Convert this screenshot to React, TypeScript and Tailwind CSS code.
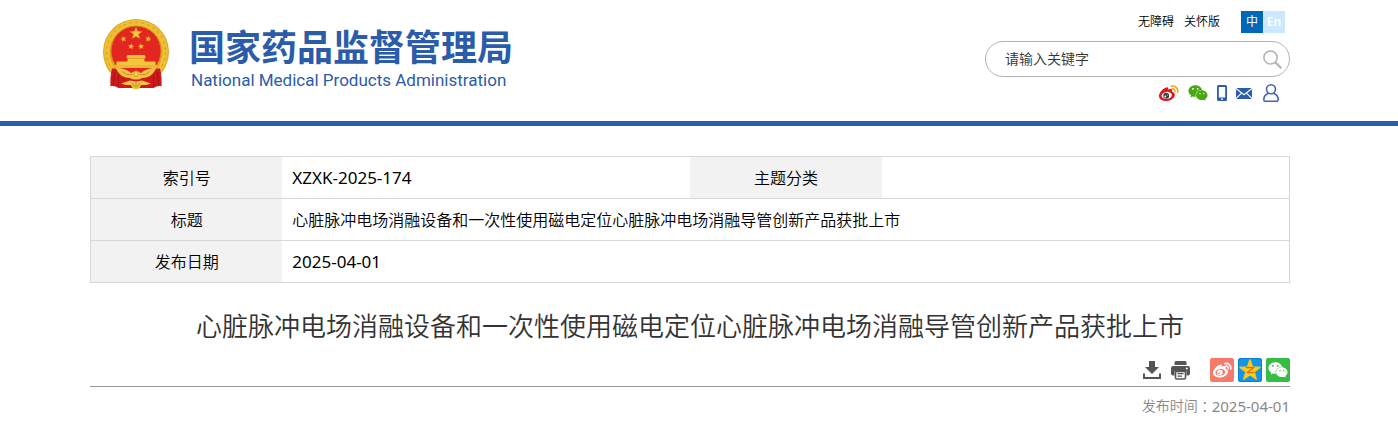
import { useState } from 'react';
import type { ReactNode } from 'react';
import { FaWeixin } from 'react-icons/fa6';

const TITLE = '心脏脉冲电场消融设备和一次性使用磁电定位心脏脉冲电场消融导管创新产品获批上市';
const STAR = 'M0 -10 L2.35 -3.24 L9.51 -3.09 L3.8 1.24 L5.88 8.09 L0 4 L-5.88 8.09 L-3.8 1.24 L-9.51 -3.09 L-2.35 -3.24 Z';

function Emblem() {
  return (
    <svg viewBox="0 0 66 72" className="h-[72px] w-[66px]" role="img" aria-label="国徽">
      <circle cx="33" cy="34" r="33" fill="#dfa51c" />
      <circle cx="33" cy="34" r="29.200" fill="none" stroke="#eec037" strokeWidth="5.500" />
      <circle cx="33" cy="34" r="29.500" fill="none" stroke="#e0a822" strokeWidth="1.500" strokeDasharray="3 3" />
      <circle cx="33" cy="33" r="25" fill="#e32620" stroke="#cf8f1a" strokeWidth="0.8" />
      <path d={STAR} transform="translate(33 15.500) scale(0.66)" fill="#f3c53a" />
      <path d={STAR} transform="translate(20.500 21) rotate(-15) scale(0.33)" fill="#f3c53a" />
      <path d={STAR} transform="translate(45.200 21) rotate(15) scale(0.33)" fill="#f3c53a" />
      <path d={STAR} transform="translate(28 28.500) rotate(10) scale(0.33)" fill="#f3c53a" />
      <path d={STAR} transform="translate(38 28.500) rotate(-10) scale(0.33)" fill="#f3c53a" />
      <path d="M24.500 37h17l1.500 3h-1.500v3.500h11V47h-39v-3.500h11V40H23z" fill="#f3c53a" />
      <path d="M24 40.300h18" stroke="#d9861f" strokeWidth="0.7" />
      <path d="M11 47h44l-2 3H13z" fill="#edb833" />
      <path d="M9 50.500c6 0 10 2 13 5h22c3-3 7-5 13-5 1.500 6 1.900 12 1.500 18-3-1-5 0-8 1.500H15.500c-3-1.500-5-2.500-8-1.500-.4-6 0-12 1.500-18z" fill="#cf1a1c" />
      <path d="M11.500 54l-1 13M15.500 57l-.5 12M54.500 54l1 13M50.500 57l.5 12" stroke="#9f1215" strokeWidth="1" />
      <path d="M13 50c7 0 11 1.500 15 5l5-2.500 5 2.500c4-3.500 8-5 15-5-2 6-7 10-14 10-3 2-9 2-12 0-7 0-12-4-14-10z" fill="#f1c441" />
      <path d="M19 53.500c4 3 6 3.500 10 3M47 53.500c-4 3-6 3.500-10 3" fill="none" stroke="#cf8b1c" strokeWidth="1" />
      <circle cx="33" cy="56" r="2.500" fill="#f7d65a" stroke="#c9851c" strokeWidth="0.7" />
      <path d="M18 65.500l9-3 6 1 6-1 9 3-5 1.500-5 0-2 4h-6l-2-4h-5z" fill="#f1c441" />
      <path d="M33 64v6M29.500 65l2 4M36.500 65l-2 4" stroke="#bd7517" strokeWidth="0.7" />
    </svg>
  );
}

function WeiboIcon({ mono = false, className }: { mono?: boolean; className: string }) {
  const body = mono ? '#fff' : '#e0141b';
  const wave = mono ? '#fff' : '#f3a712';
  const eye = mono ? '#f57a6c' : '#fff';
  const pupil = mono ? '#fff' : '#3d3d3d';
  return (
    <svg viewBox="0 0 20 16" className={className} aria-hidden="true">
      <path d="M7.800 2.200c1.300-.3 1.800.8 1.300 2.300 2-.9 4.300-.9 4.200.8l-.3 1.400c1.700.5 2.800 1.400 2.800 3 0 3.200-3.800 6.200-8.300 6.200C3.300 15.900 0 14 0 10.900 0 7.500 4.700 2.800 7.800 2.200z" fill={body} />
      <ellipse cx="7.700" cy="10.400" rx="5.200" ry="3.500" fill={eye} transform="rotate(-7 7.700 10.400)" />
      <circle cx="7.200" cy="10.700" r="2.900" fill={pupil} />
      <circle cx="6.300" cy="11.500" r="0.900" fill={eye} />
      <circle cx="8.200" cy="10.100" r="0.500" fill={eye} />
      <path d="M12.500 1.200c3.600-.9 6.900 1.800 6.100 5.900" fill="none" stroke={wave} strokeWidth="1.700" strokeLinecap="round" />
      <path d="M13 3.900c2-.3 3.300.9 2.900 2.700" fill="none" stroke={wave} strokeWidth="1.500" strokeLinecap="round" />
    </svg>
  );
}

function PhoneIcon() {
  return (
    <svg viewBox="0 0 10 16" className="h-4 w-[10px]" fill="#2b5cad" aria-hidden="true">
      <path fillRule="evenodd" d="M1.500 0h7A1.500 1.500 0 0 1 10 1.500v13A1.500 1.500 0 0 1 8.500 16h-7A1.500 1.500 0 0 1 0 14.500v-13A1.500 1.500 0 0 1 1.500 0zM1.800 2v10.500h6.400V2zM4 13.500v1.300h2v-1.300z" />
    </svg>
  );
}

function MailIcon() {
  return (
    <svg viewBox="0 0 16 11" className="h-[11px] w-4" aria-hidden="true">
      <path d="M0 0h16v11H0z" fill="#2b5cad" />
      <path d="M0 .5l8 6.200L16 .5M0 10.500l5.500-5.400M16 10.500l-5.500-5.400" fill="none" stroke="#fff" strokeWidth="1.100" />
    </svg>
  );
}

function UserIcon() {
  return (
    <svg viewBox="0 0 16 18" className="h-[18px] w-4" fill="none" stroke="#4560b0" strokeWidth="1.600" aria-hidden="true">
      <circle cx="8" cy="5.300" r="4.500" />
      <path d="M5.300 9.400C2.300 10.400.8 12.600.8 15.500c0 1.100.6 1.700 1.600 1.700h11.200c1 0 1.600-.6 1.600-1.700 0-2.900-1.500-5.100-4.500-6.100" />
    </svg>
  );
}

function DownloadIcon() {
  return (
    <svg viewBox="0 0 18 18" className="size-[18px]" aria-hidden="true">
      <path d="M6 0h6v6h4L9 13 2 6h4z" fill="#555" />
      <path d="M1 12.500V17h16v-4.500" fill="none" stroke="#555" strokeWidth="2" />
    </svg>
  );
}

function PrinterIcon() {
  return (
    <svg viewBox="0 0 19 19" className="size-[19px]" aria-hidden="true">
      <path d="M5 0h9a1.500 1.500 0 0 1 1.500 1.500V4h-12V1.500A1.500 1.500 0 0 1 5 0z" fill="#555" />
      <path d="M2 5h15a2 2 0 0 1 2 2v5.500a2 2 0 0 1-2 2h-1.500V10h-12v4.500H2a2 2 0 0 1-2-2V7a2 2 0 0 1 2-2z" fill="#555" />
      <circle cx="15.800" cy="7.500" r="1" fill="#fff" />
      <path d="M4.500 10.500h10v6.200c0 .7-.5 1.300-1.300 1.300H5.800c-.8 0-1.300-.6-1.300-1.300z" fill="#fff" stroke="#555" strokeWidth="1.600" />
      <path d="M6.500 12.700h6M6.500 15.200h4.500" stroke="#555" strokeWidth="1.300" />
    </svg>
  );
}

function QzoneIcon() {
  return (
    <svg viewBox="0 0 24 24" className="size-6" aria-hidden="true">
      <rect x="0.500" y="0.500" width="23" height="23" rx="1.500" fill="#1296e8" stroke="#0b7fd0" />
      <path d={STAR} transform="translate(12 12.500) scale(1.040)" fill="#ffd21f" stroke="#ffc21a" strokeWidth="1.600" strokeLinejoin="round" />
      <path d="M8 9.800c2.800-.5 5.200-.5 7.500 0l-6 4.600c2.300.4 4.500.4 6.700 0" fill="none" stroke="#d9760a" strokeWidth="1.400" />
    </svg>
  );
}

function IconLink({ label, className = '', children }: { label: string; className?: string; children: ReactNode }) {
  return (
    <a href="#" aria-label={label} className={`flex items-center justify-center ${className}`}>
      {children}
    </a>
  );
}

export default function App() {
  const [keyword, setKeyword] = useState('');

  return (
    <div className="bg-white font-['Noto_Sans','Noto_Sans_CJK_SC',sans-serif] font-[350] text-black">
      <header className="border-b-5 border-[#2a5caa] pr-[18px]">
        <div className="mx-auto flex max-w-[1200px] justify-between pb-[19px]">
          <a href="#" className="flex gap-5 pt-[18px] pl-[13px] text-[#2a5caa]">
            <Emblem />
            <div className="pt-1">
              <div className="font-['Noto_Sans_CJK_SC',sans-serif] text-4xl leading-[46px] font-bold">国家药品监督管理局</div>
              <div className="pl-[2px] font-['Roboto',sans-serif] text-[17px] leading-6 font-normal">National Medical Products Administration</div>
            </div>
          </a>

          <div className="w-[305px] pt-[11px]">
            <div className="flex items-center justify-end pr-[5px] text-xs leading-[22px]">
              <a href="#" className="mr-[10px]">无障碍</a>
              <a href="#" className="mr-[21px]">关怀版</a>
              <a href="#" className="w-[22px] bg-[#0068b7] text-center font-normal text-white">中</a>
              <a href="#" className="w-[22px] bg-[#cce8ff] text-center font-semibold text-white">En</a>
            </div>
            <form className="mt-2 flex h-9 items-center rounded-full border border-[#b3b3b3] pr-[7px] pl-[19px]" onSubmit={(e) => e.preventDefault()}>
              <input
                type="text"
                aria-label="请输入关键字"
                placeholder="请输入关键字"
                value={keyword}
                onChange={(e) => setKeyword(e.target.value)}
                className="min-w-0 flex-1 text-sm outline-none placeholder:text-[#333]"
              />
              <button type="submit" aria-label="搜索">
                <svg viewBox="0 0 19 19" className="size-[19px]" fill="none" stroke="#b0b0b0" strokeWidth="1.500" aria-hidden="true">
                  <circle cx="7.500" cy="7.500" r="6.600" />
                  <path d="M12.300 12.300l6 6" strokeWidth="2" />
                </svg>
              </button>
            </form>
            <div className="mt-[7px] flex h-[18px] items-center justify-end gap-[9px] pr-[11px]">
              <IconLink label="微博"><WeiboIcon className="h-4 w-5" /></IconLink>
              <IconLink label="微信"><FaWeixin className="size-5 text-[#48a810]" /></IconLink>
              <IconLink label="手机版"><PhoneIcon /></IconLink>
              <IconLink label="邮箱"><MailIcon /></IconLink>
              <IconLink label="个人中心" className="pl-[2px]"><UserIcon /></IconLink>
            </div>
          </div>
        </div>
      </header>

      <main className="pr-[18px]">
        <div className="mx-auto max-w-[1200px] pt-[30px]">
          <table className="w-full table-fixed border-collapse border border-[#d7d7d7] leading-6">
            <colgroup>
              <col className="w-[16%]" />
              <col className="w-[34%]" />
              <col className="w-[16%]" />
              <col />
            </colgroup>
            <tbody>
              <tr className="h-[42px] border-b border-[#d7d7d7]">
                <th scope="row" className="bg-[#f2f2f2] font-[350]">索引号</th>
                <td className="px-[10px] text-[17px] font-normal">XZXK-2025-174</td>
                <th scope="row" className="bg-[#f2f2f2] font-[350]">主题分类</th>
                <td className="px-[10px]"></td>
              </tr>
              <tr className="h-[42px] border-b border-[#d7d7d7]">
                <th scope="row" className="bg-[#f2f2f2] font-[350]">标题</th>
                <td colSpan={3} className="px-[10px]">{TITLE}</td>
              </tr>
              <tr className="h-[42px]">
                <th scope="row" className="bg-[#f2f2f2] font-[350]">发布日期</th>
                <td colSpan={3} className="px-[10px] text-[17px] font-normal">2025-04-01</td>
              </tr>
            </tbody>
          </table>

          <h1 className="mt-[23px] text-center text-[26px] leading-10 font-[350] text-[#333]">{TITLE}</h1>

          <div className="mt-3 flex items-center justify-end border-b border-[#999] pb-1">
            <button type="button" aria-label="下载" className="mr-[10px]"><DownloadIcon /></button>
            <button type="button" aria-label="打印" className="mr-5"><PrinterIcon /></button>
            <div className="flex gap-1">
              <IconLink label="分享到微博" className="size-6 rounded-xs bg-[#f57a6c]"><WeiboIcon mono className="h-4 w-[19px]" /></IconLink>
              <IconLink label="分享到QQ空间"><QzoneIcon /></IconLink>
              <IconLink label="分享到微信" className="size-6 rounded-xs bg-[#35bd44]"><FaWeixin className="size-5 text-white" /></IconLink>
            </div>
          </div>

          <div className="flex items-center justify-end pt-[7px] text-sm leading-6 text-[#888]">
            <span>发布时间</span>
            <span className="font-['Noto_Sans_CJK_TC',sans-serif]">{'\uff1a'}</span>
            <time className="text-[15px] font-normal">2025-04-01</time>
          </div>
        </div>
      </main>
    </div>
  );
}
